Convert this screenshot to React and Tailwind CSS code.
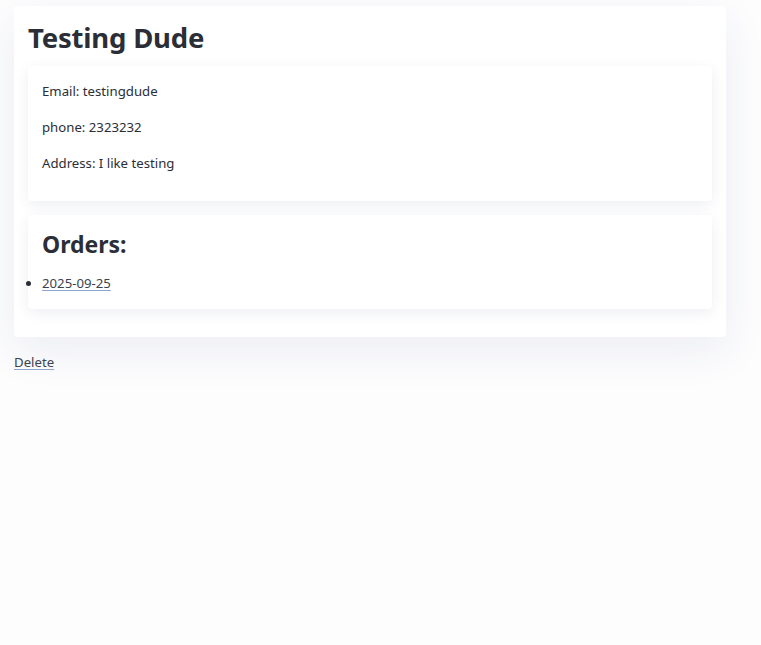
import React from 'react';

const card = 'bg-white rounded-[4px] shadow-[0_4px_14px_rgba(40,50,100,0.08)]';
const linkCls = 'text-[#3d4250] underline decoration-[#8ea6cc] underline-offset-2';

const App = () => {
  return (
    <div className="min-h-[645px] bg-[#fdfdfe] text-[#2b2e36] font-['Noto_Sans','Open_Sans',sans-serif] text-[13.2px]">
      <div className="pt-[6px] pl-[14px]">
        {/* PROFILE */}
        <div className="w-[712px] bg-white rounded-[4px] px-[14px] pt-[14px] pb-[28px] shadow-[0_14px_44px_rgba(40,50,110,0.08)]">
          <h1 className="text-[27.5px] leading-[36px] font-bold mb-[10px] tracking-[-0.2px]">Testing Dude</h1>

          <div className={`${card} px-[14px] pt-[15px] pb-[27px] flex flex-col gap-[15px]`}>
            <p className="leading-[21px]">Email: testingdude</p>
            <p className="leading-[21px]">phone: 2323232</p>
            <p className="leading-[21px]">Address: I like testing</p>
          </div>

          {/* ORDERS */}
          <div className={`${card} mt-[14px] px-[14px] pt-[14px] pb-[15px]`}>
            <h2 className="text-[23px] leading-[30px] font-bold mb-[14px]">Orders:</h2>
            <ul className="list-disc list-outside pl-0 marker:text-[#2b2e36]">
              <li className="leading-[21px]">
                <a href="#" className={linkCls}>2025-09-25</a>
              </li>
            </ul>
          </div>
        </div>

        <div className="mt-[16px]">
          <a href="#" className={linkCls}>Delete</a>
        </div>
      </div>
    </div>
  );
};

export default App;
